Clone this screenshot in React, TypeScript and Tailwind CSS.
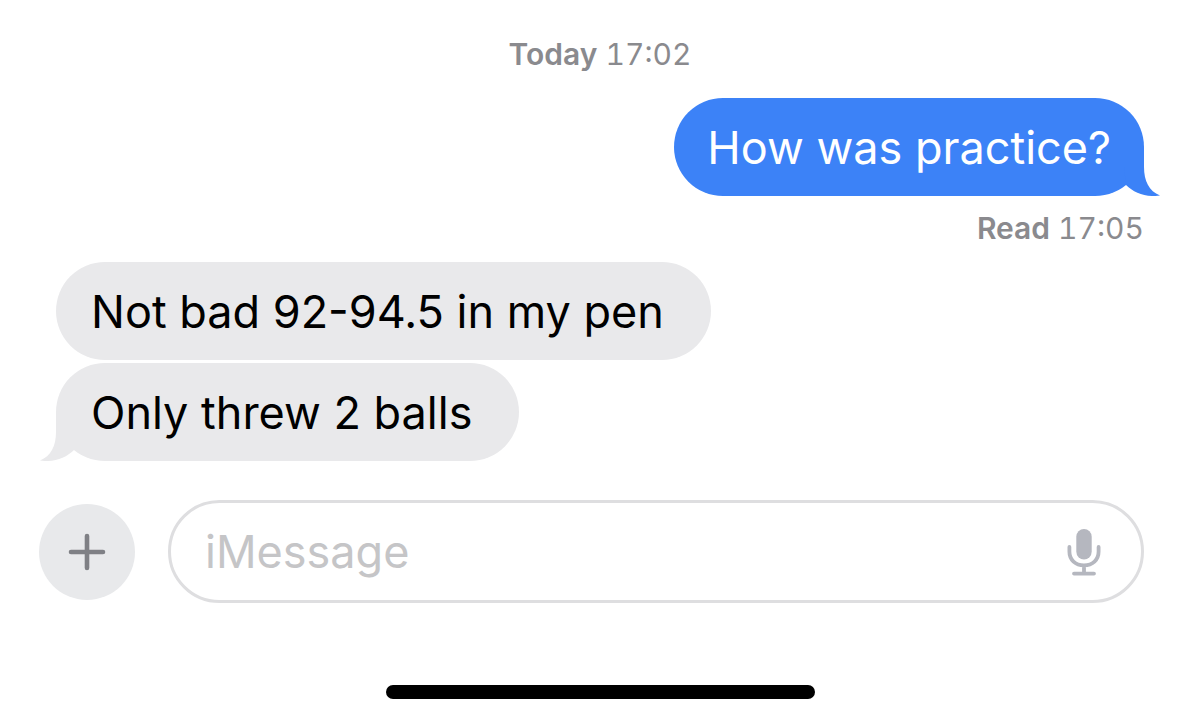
import { useState } from 'react';

function MicIcon() {
    return (
        <svg viewBox="0 0 34 48" className="h-12 w-[34px]" fill="none" aria-hidden="true">
            <rect x="9.3" y="1" width="15.4" height="30.4" rx="7.7" fill="#b5b7bf" />
            <path
                d="M2.4 19v4.5C2.4 32 8.5 37.3 17 37.3S31.6 32 31.6 23.5V19M17 37.5V45M7 45.6h20"
                stroke="#b5b7bf"
                strokeWidth="3.8"
                strokeLinecap="round"
            />
        </svg>
    );
}

function Tail({ className }: { className: string }) {
    return (
        <svg viewBox="0 0 36 49" className={`absolute bottom-0 h-[49px] w-9 ${className}`} aria-hidden="true">
            <path d="M20 0V20C20 34 25 44 36 48.6C22 50.5 10 46 2 38L0 20Z" fill="currentColor" />
        </svg>
    );
}

export default function App() {
    const [message, setMessage] = useState('');

    return (
        <main className="flex min-h-screen flex-col bg-white font-[Inter,sans-serif] text-black">
            <p className="pt-9 text-center text-[30px] leading-9 text-[#8a8a8e] tabular-nums">
                <span className="font-semibold">Today</span> 17:02
            </p>

            {/* Conversation */}
            <section className="flex flex-col px-14 pt-[26px]">
                <div className="relative self-end rounded-[49px] bg-[#3c82f7] px-[33px] pt-[23px] pb-[21px] text-[45px] leading-[54px] text-white">
                    How was practice?
                    <Tail className="-right-4 text-[#3c82f7]" />
                </div>
                <p className="self-end pt-[14px] text-[30px] leading-9 text-[#8a8a8e] tabular-nums">
                    <span className="font-semibold">Read</span> 17:05
                </p>
                <div className="mt-4 self-start rounded-[49px] bg-[#e9e9eb] pt-[23px] pr-[47px] pb-[21px] pl-[35px] text-[45px] leading-[54px]">
                    Not bad 92-94.5 in my pen
                </div>
                <div className="relative mt-[3px] self-start rounded-[49px] bg-[#e9e9eb] pt-[23px] pr-[47px] pb-[21px] pl-[35px] text-[45px] leading-[54px]">
                    Only threw 2 balls
                    <Tail className="-left-4 -scale-x-100 text-[#e9e9eb]" />
                </div>
            </section>

            {/* Composer */}
            <form className="flex items-center gap-[33px] pt-[39px] pr-14 pl-[39px]" onSubmit={(e) => e.preventDefault()}>
                <button
                    type="button"
                    aria-label="Add attachment"
                    className="flex size-24 shrink-0 items-center justify-center rounded-full bg-[#e8e9eb]"
                >
                    <svg viewBox="0 0 38 38" className="size-[38px]" aria-hidden="true">
                        <path d="M19 3v32M3 19h32" stroke="#7f8085" strokeWidth="4.6" strokeLinecap="round" />
                    </svg>
                </button>
                <div className="flex h-[103px] min-w-0 flex-1 items-center rounded-full border-3 border-[#dedee0] pr-10 pl-[34px]">
                    <input
                        type="text"
                        aria-label="Message"
                        placeholder="iMessage"
                        value={message}
                        onChange={(e) => setMessage(e.target.value)}
                        className="min-w-0 flex-1 bg-transparent text-[45px] leading-[54px] outline-none placeholder:text-[#c5c5c7]"
                    />
                    <button type="button" aria-label="Dictate">
                        <MicIcon />
                    </button>
                </div>
            </form>

            {/* Home indicator */}
            <div className="mx-auto mt-auto mb-[22px] h-[14px] w-[429px] rounded-full bg-black" />
        </main>
    );
}
